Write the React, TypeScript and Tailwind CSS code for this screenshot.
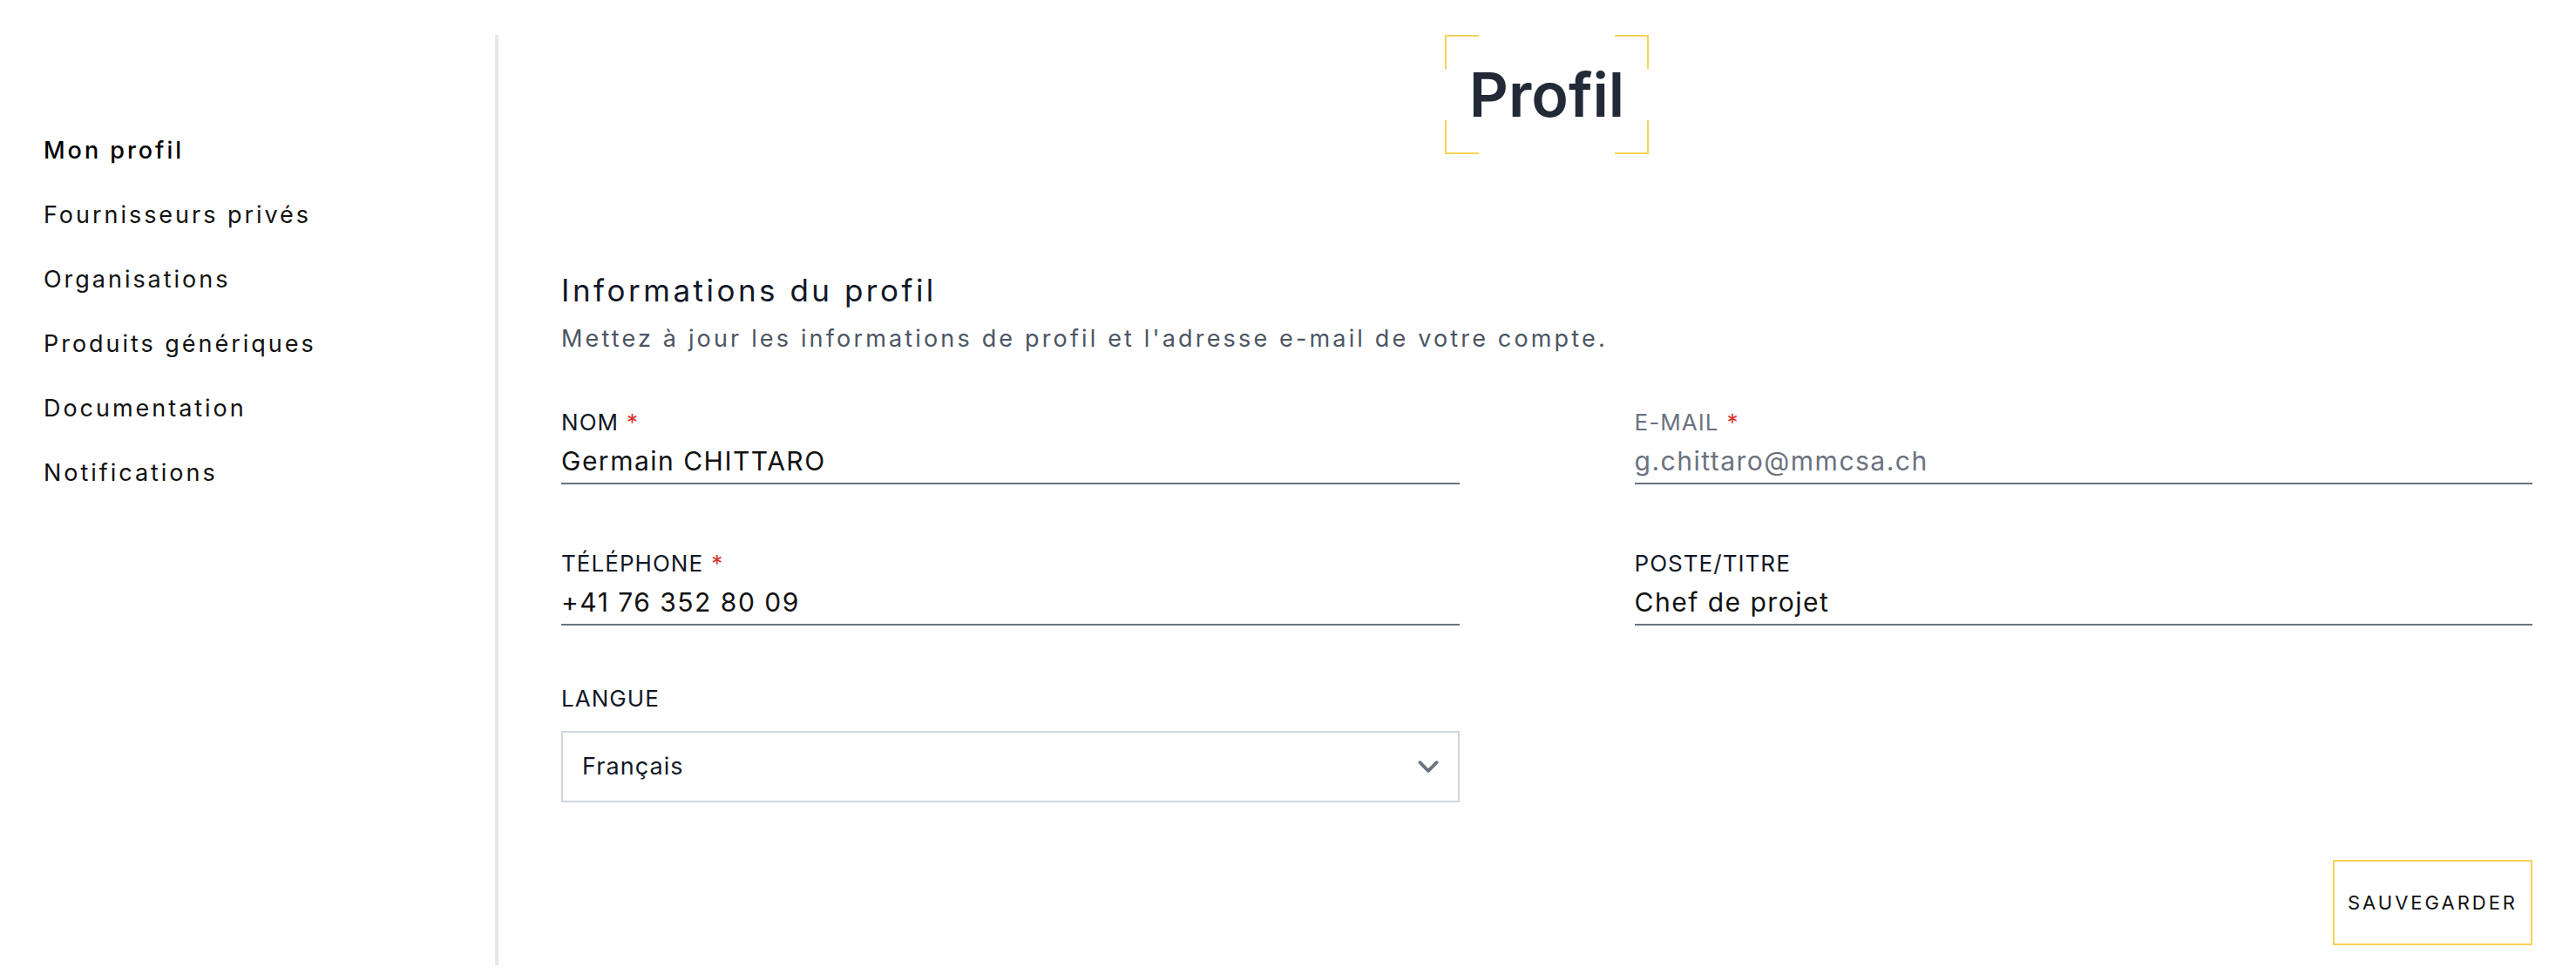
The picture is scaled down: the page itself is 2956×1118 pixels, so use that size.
const navItems = [
  { label: "Mon profil", active: true },
  { label: "Fournisseurs privés" },
  { label: "Organisations" },
  { label: "Produits génériques" },
  { label: "Documentation" },
  { label: "Notifications" },
];

function Corner({ className }: { className: string }) {
  return <span className={`absolute h-[39px] w-[39px] border-[#f7d257] ${className}`} />;
}

function Field({
  label,
  value,
  required = false,
  disabled = false,
}: {
  label: string;
  value: string;
  required?: boolean;
  disabled?: boolean;
}) {
  return (
    <div className="flex flex-col">
      <p
        className={`text-[26px] leading-none tracking-[0.04em] ${disabled ? "text-[#6b7280]" : "text-[#111827]"}`}
      >
        {label}
        {required ? <span className="ml-[9px] text-[#d9342b]">*</span> : null}
      </p>
      <div
        className={`mt-[16px] border-b-2 border-[#6b7280] pb-[10px] text-[30px] leading-none tracking-[0.05em] ${disabled ? "text-[#6b7280]" : "text-[#111]"}`}
      >
        {value}
      </div>
    </div>
  );
}

export default function App() {
  return (
    <div
      className="flex h-[1118px] w-full bg-white text-[#111]"
      style={{ fontFamily: "Inter, 'Noto Sans', sans-serif" }}
    >
      <aside className="w-[572px] shrink-0 pb-[10px] pt-[40px]">
        <div className="h-full border-r-4 border-[#e5e7eb] pl-[50px]">
          <nav className="flex flex-col gap-[34px] pt-[113px]">
            {navItems.map((item) => (
              <a
                key={item.label}
                href="#"
                className={`text-[27px] leading-[40px] tracking-[0.11em] ${item.active ? "font-medium text-black" : "text-[#111]"}`}
              >
                {item.label}
              </a>
            ))}
          </nav>
        </div>
      </aside>

      <main className="flex flex-1 flex-col pl-[72px] pr-[50px] pt-[40px]">
        <div className="flex justify-center">
          <div className="relative flex h-[137px] w-[234px] items-center justify-center">
            <Corner className="left-0 top-0 border-l-2 border-t-2" />
            <Corner className="right-0 top-0 border-r-2 border-t-2" />
            <Corner className="bottom-0 left-0 border-b-2 border-l-2" />
            <Corner className="bottom-0 right-0 border-b-2 border-r-2" />
            <h1 className="text-[70px] font-semibold leading-none text-[#222a37]">Profil</h1>
          </div>
        </div>

        <h2 className="mt-[139px] text-[35px] leading-none tracking-[0.1em] text-[#111827]">
          Informations du profil
        </h2>
        <p className="mt-[24px] text-[27px] leading-none tracking-[0.117em] text-[#4b5563]">
          Mettez à jour les informations de profil et l'adresse e-mail de votre compte.
        </p>

        <div className="mt-[70px] grid grid-cols-2 gap-x-[201px]">
          <Field label="NOM" value="Germain CHITTARO" required />
          <Field label="E-MAIL" value="g.chittaro@mmcsa.ch" required disabled />
          <div className="mt-[78px]">
            <Field label="TÉLÉPHONE" value="+41 76 352 80 09" required />
          </div>
          <div className="mt-[78px]">
            <Field label="POSTE/TITRE" value="Chef de projet" />
          </div>
          <div className="mt-[71px] flex flex-col">
            <p className="text-[26px] leading-none tracking-[0.04em] text-[#111827]">LANGUE</p>
            <div className="mt-[24px] flex h-[82px] items-center justify-between border-2 border-[#d1d5db] pl-[22px] pr-[10px]">
              <span className="text-[27px] tracking-[0.04em] text-[#111827]">Français</span>
              <svg width="48" height="48" viewBox="0 0 20 20" fill="none" aria-hidden="true">
                <path
                  d="M6 8l4 4 4-4"
                  stroke="#6b7280"
                  strokeWidth="1.6"
                  strokeLinecap="round"
                  strokeLinejoin="round"
                />
              </svg>
            </div>
          </div>
        </div>

        <div className="mt-[66px] flex justify-end">
          <button
            type="button"
            className="h-[98px] w-[229px] border-2 border-[#f7d257] text-[22px] tracking-[0.136em] text-[#111]"
          >
            SAUVEGARDER
          </button>
        </div>
      </main>
    </div>
  );
}
